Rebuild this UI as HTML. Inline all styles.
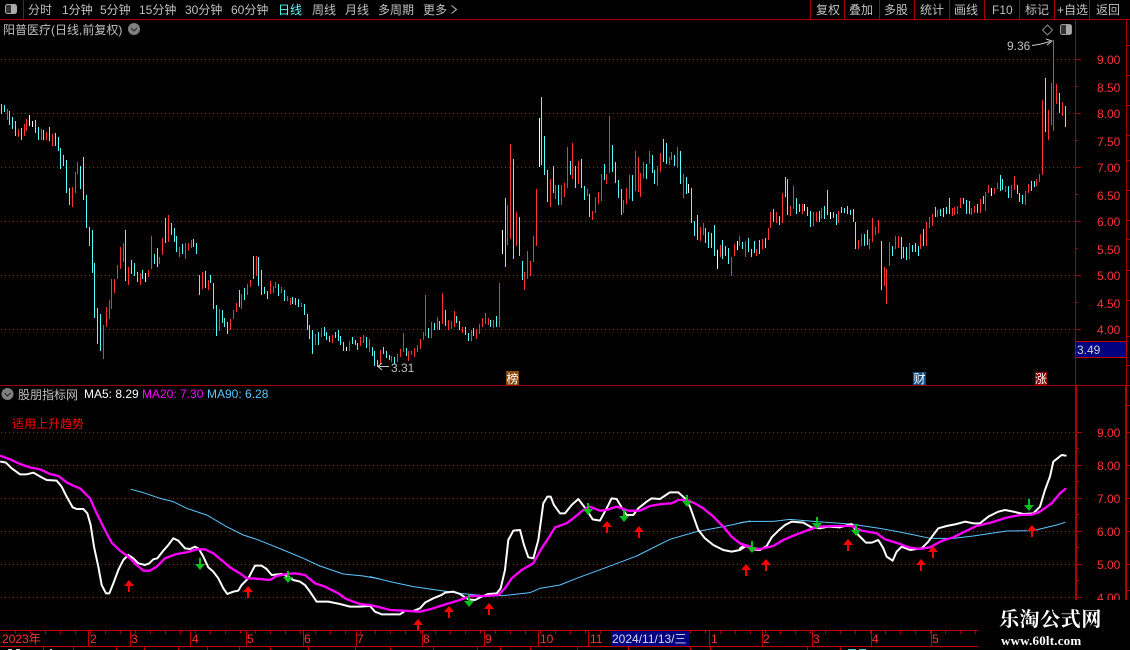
<!DOCTYPE html>
<html><head><meta charset="utf-8"><style>
html,body{margin:0;padding:0;background:#000;width:1130px;height:650px;overflow:hidden}
svg{display:block}
text{font-family:"Liberation Sans","WenQuanYi Zen Hei","Noto Sans CJK SC",sans-serif;font-size:12px;fill:#c0c0c0}
.p{fill:#ff3232}
.line{fill:none;stroke-linejoin:round;stroke-linecap:round}
</style></head><body>
<svg width="1130" height="650" viewBox="0 0 1130 650" xmlns="http://www.w3.org/2000/svg">
<rect width="1130" height="650" fill="#000"/>
<!-- top bar -->
<path d="M0 19.5H1130M23.5 0V19M810.5 0V19M844.5 0V19M879.5 0V19M914.5 0V19M949.5 0V19M984.5 0V19M1019.5 0V19M1054.5 0V19M1089.5 0V19" stroke="#a80000" fill="none"/>
<rect x="5.5" y="4.5" width="11" height="9" rx="2" fill="#333" stroke="#aaa"/><rect x="11" y="5" width="5" height="8" fill="#aaa"/>
<text x="28" y="14">分时</text><text x="62" y="14">1分钟</text><text x="100" y="14">5分钟</text><text x="139" y="14">15分钟</text><text x="185" y="14">30分钟</text><text x="231" y="14">60分钟</text><text x="278" y="14" style="fill:#55ffff">日线</text><text x="312" y="14">周线</text><text x="345" y="14">月线</text><text x="378" y="14">多周期</text><text x="423" y="14">更多</text>
<path d="M451.500 5.500L456.500 9.500L451.500 13.500" stroke="#c0c0c0" fill="none"/>
<text x="816" y="14">复权</text><text x="849" y="14">叠加</text><text x="884" y="14">多股</text><text x="920" y="14">统计</text><text x="954" y="14">画线</text><text x="992" y="14">F10</text><text x="1025" y="14">标记</text><text x="1057" y="14">+自选</text><text x="1096" y="14">返回</text>
<text x="3" y="34">阳普医疗(日线,前复权)</text>
<circle cx="134" cy="29" r="6" fill="#808080"/><path d="M131 28L134 31L137 28" stroke="#222" fill="none"/>
<path d="M1047.500 25L1052.500 30L1047.500 35L1042.500 30Z" stroke="#888" fill="none"/>
<rect x="1060.500" y="24.500" width="11" height="10" rx="2" fill="#333" stroke="#999"/><rect x="1066" y="25" width="5" height="9" fill="#aaa"/>
<!-- grids -->
<g stroke="#a02424" stroke-dasharray="1 3" stroke-width="1">
<path d="M1 59.500H1075M1 113.500H1075M1 167.500H1075M1 221.500H1075M1 275.500H1075M1 329.500H1075"/>
<path d="M1 432.500H1075M1 465.500H1075M1 498.500H1075M1 531.500H1075M1 564.500H1075M1 597.500H1075"/>
</g>
<!-- axes -->
<path d="M1075.500 19V385M1126.500 19V385M1075 59.500H1081M1075 86.500H1078M1075 113.500H1081M1075 140.500H1078M1075 167.500H1081M1075 194.500H1078M1075 221.500H1081M1075 248.500H1078M1075 275.500H1081M1075 302.500H1078M1075 329.500H1081M1126 45.500H1130M1126 75.500H1130M1126 105.500H1130M1126 135.500H1130M1126 160.500H1130M1126 190.500H1130M1126 220.500H1130M1126 239.500H1130M1126 270.500H1130M1126 300.500H1130M1126 336.500H1130M1126 365.500H1130" stroke="#a80000" fill="none"/>
<path d="M0 385.500H1130" stroke="#a00000"/>
<path d="M1076 386V600M1126 386V600" stroke="#b00000" stroke-width="2"/>
<path d="M1076 432.500H1082M1076 448.500H1079M1076 465.500H1082M1076 481.500H1079M1076 498.500H1082M1076 514.500H1079M1076 531.500H1082M1076 547.500H1079M1076 564.500H1082M1076 580.500H1079M1076 597.500H1082M1126 405.500H1130M1126 432.500H1130M1126 465.500H1130M1126 498.500H1130M1126 531.500H1130M1126 564.500H1130M1126 590.500H1130" stroke="#a80000" fill="none"/>
<g class="prices">
<text class="p" x="1097" y="64">9.00</text><text class="p" x="1097" y="92">8.50</text><text class="p" x="1097" y="118">8.00</text><text class="p" x="1097" y="146">7.50</text><text class="p" x="1097" y="172">7.00</text><text class="p" x="1097" y="200">6.50</text><text class="p" x="1097" y="226">6.00</text><text class="p" x="1097" y="254">5.50</text><text class="p" x="1097" y="280">5.00</text><text class="p" x="1097" y="308">4.50</text><text class="p" x="1097" y="334">4.00</text>
<text class="p" x="1097" y="437">9.00</text><text class="p" x="1097" y="470">8.00</text><text class="p" x="1097" y="503">7.00</text><text class="p" x="1097" y="536">6.00</text><text class="p" x="1097" y="569">5.00</text><text class="p" x="1097" y="602">4.00</text>
</g>
<rect x="1075.500" y="341.500" width="51" height="16" fill="#000080" stroke="#c00000"/>
<text x="1077" y="354" style="fill:#d0d0d0">3.49</text>
<!-- candles -->
<g fill="none" stroke-width="1" shape-rendering="crispEdges">
<path stroke="#55ffff" d="M1.500 104V114M4.500 105V112M9.500 111V125M12.500 117V129M15.500 121V136M21.500 128V140M35.500 120V133M38.500 127V140M43.500 130V140M49.500 127V141M55.500 133V146M58.500 137V151M60.500 148V169M63.500 155V166M66.500 160V193M69.500 188V205M80.500 166V189M83.500 157V200M86.500 195V228M89.500 227V246M92.500 230V273M94.500 263V318M97.500 308V344M100.500 314V351M125.500 230V281M131.500 260V274M134.500 263V276M137.500 272V282M142.500 270V279M154.500 254V264M157.500 248V267M165.500 218V243M171.500 223V235M174.500 228V242M176.500 236V252M182.500 244V254M193.500 239V247M196.500 243V254M199.500 275V295M205.500 271V288M210.500 275V283M213.500 283V309M216.500 305V336M222.500 310V323M224.500 318V327M227.500 322V334M239.500 290V307M244.500 288V300M253.500 256V279M258.500 257V286M261.500 270V295M264.500 287V294M267.500 291V299M278.500 284V296M284.500 290V301M292.500 297V304M295.500 298V305M298.500 299V307M304.500 304V315M307.500 314V330M309.500 325V339M312.500 330V354M318.500 332V345M324.500 327V336M326.500 332V340M329.500 336V342M335.500 332V338M338.500 330V341M340.500 336V345M343.500 342V351M352.500 337V344M355.500 340V345M357.500 343V350M366.500 337V348M372.500 347V356M374.500 351V366M377.500 360V367M383.500 347V354M386.500 351V358M389.500 355V360M394.500 357V364M406.500 348V356M428.500 328V338M434.500 323V330M439.500 321V330M445.500 310V326M456.500 316V323M459.500 321V330M465.500 327V335M468.500 333V341M473.500 328V336M490.500 320V327M496.500 316V327M505.500 198V267M513.500 159V259M519.500 217V256M522.500 261V280M541.500 97V165M544.500 136V175M547.500 170V202M553.500 166V193M558.500 185V205M570.500 161V175M575.500 166V188M581.500 159V188M584.500 186V200M589.500 194V217M604.500 164V180M612.500 145V172M615.500 162V183M618.500 180V198M621.500 189V215M632.500 175V201M646.500 164V179M652.500 155V173M654.500 170V184M663.500 139V162M666.500 143V164M674.500 155V166M680.500 151V184M686.500 177V194M691.500 188V223M694.500 221V236M697.500 215V240M705.500 228V243M708.500 232V248M711.500 233V248M714.500 225V256M722.500 240V259M725.500 246V256M728.500 248V264M742.500 242V249M748.500 238V252M751.500 249V257M754.500 241V253M759.500 240V254M765.500 238V248M773.500 209V222M779.500 216V225M785.500 177V197M787.500 179V215M796.500 198V214M799.500 204V212M807.500 207V216M810.500 211V227M819.500 211V222M824.500 206V219M827.500 190V215M833.500 212V218M836.500 214V225M841.500 207V213M844.500 208V213M847.500 206V214M850.500 210V215M853.500 209V222M855.500 222V249M864.500 234V246M867.500 230V245M881.500 241V290M892.500 246V256M901.500 237V259M903.500 247V258M906.500 247V260M912.500 245V252M915.500 243V252M918.500 246V256M923.500 229V246M935.500 207V217M940.500 209V216M943.500 208V217M946.500 207V214M949.500 198V214M963.500 198V204M966.500 200V214M969.500 201V214M977.500 204V213M983.500 196V204M1000.500 175V191M1002.500 179V190M1008.500 186V198M1017.500 185V194M1019.500 193V202M1022.500 195V204M1031.500 181V191M1034.500 181V187M1045.500 78V132M1059.500 93V113M1065.500 106V127"/>
<path stroke="#ff3232" d="M7.500 109V120M18.500 129V137M24.500 124V136M26.500 119V131M41.500 129V140M46.500 132V140M52.500 134V146M72.500 187V207M75.500 172V193M77.500 162V174M103.500 325V359M106.500 307V327M109.500 300V319M111.500 279V309M114.500 279V293M117.500 265V279M120.500 247V269M123.500 243V262M128.500 267V285M140.500 273V285M148.500 270V277M151.500 236V269M159.500 257V264M162.500 238V255M168.500 215V242M179.500 247V257M185.500 243V259M188.500 243V251M191.500 240V248M202.500 272V289M208.500 280V290M219.500 309V331M230.500 319V330M233.500 310V319M236.500 303V312M241.500 294V309M247.500 284V295M250.500 280V287M256.500 256V276M270.500 281V294M273.500 286V293M275.500 282V288M281.500 287V293M287.500 296V301M290.500 298V305M301.500 303V307M315.500 334V345M321.500 328V337M332.500 335V343M349.500 341V351M360.500 337V346M363.500 335V343M369.500 339V352M380.500 350V365M391.500 356V362M397.500 354V362M400.500 349V357M403.500 333V352M408.500 351V361M411.500 351V355M414.500 348V357M417.500 345V352M420.500 339V349M423.500 332V340M425.500 295V336M431.500 322V338M437.500 317V330M442.500 293V324M448.500 320V330M451.500 321V329M454.500 311V327M462.500 327V333M471.500 330V341M476.500 329V339M479.500 324V334M482.500 318V327M485.500 313V324M488.500 318V325M493.500 320V328M499.500 283V327M507.500 205V245M510.500 144V239M516.500 212V246M524.500 272V290M527.500 251V279M530.500 261V276M533.500 236V262M536.500 189V246M550.500 179V207M555.500 185V199M561.500 185V205M564.500 183V197M567.500 147V188M572.500 143V179M578.500 161V184M587.500 189V196M592.500 211V220M595.500 197V213M598.500 192V204M601.500 174V201M606.500 174V184M609.500 116V173M623.500 200V213M626.500 188V204M629.500 175V199M635.500 151V191M638.500 157V192M640.500 173V197M643.500 162V178M649.500 151V164M657.500 166V186M660.500 153V172M669.500 157V165M671.500 152V160M677.500 147V168M683.500 174V198M700.500 227V241M703.500 223V235M720.500 245V257M731.500 257V276M734.500 244V256M739.500 236V246M745.500 241V257M756.500 249V256M762.500 239V249M768.500 228V240M770.500 212V228M776.500 212V223M782.500 193V223M790.500 206V216M793.500 186V209M802.500 204V214M813.500 212V226M816.500 212V222M821.500 208V219M838.500 211V223M858.500 240V249M861.500 234V246M869.500 239V249M872.500 218V242M875.500 227V235M878.500 220V233M884.500 267V286M886.500 269V304M889.500 242V266M895.500 236V249M898.500 236V248M909.500 243V259M920.500 234V249M926.500 222V246M929.500 217V228M932.500 214V226M937.500 210V217M952.500 208V216M954.500 207V215M957.500 206V214M960.500 198V208M971.500 208V215M974.500 206V213M980.500 199V213M985.500 192V211M988.500 185V193M994.500 188V194M997.500 183V189M1005.500 186V192M1011.500 185V198M1014.500 176V190M1025.500 191V205M1028.500 184V193M1036.500 179V186M1039.500 174V182M1042.500 100V175M1048.500 110V140M1051.500 83V125M1053.500 40V131M1056.500 84V104M1062.500 102V116"/>
<path stroke="#ffffff" d="M29.500 115V126M32.500 121V127M145.500 273V282M346.500 347V351M502.500 230V254M539.500 118V167M688.500 184V193M717.500 250V269M737.500 241V250M804.500 204V211M830.500 212V219M991.500 188V196"/>
</g>
<!-- hi/lo marks -->
<text x="1007" y="50">9.36</text><path d="M1032 45.500L1041 44L1050 41.500M1046 39L1052 41L1047 45" stroke="#c8c8c8" fill="none"/>
<text x="391" y="372">3.31</text><path d="M389 366.500H378M382 363L378 366.500L382 370" stroke="#c8c8c8" fill="none"/>
<!-- badges -->
<rect x="506" y="371" width="13" height="14" fill="#8a4a0c"/><text x="506.500" y="383" style="fill:#fff">榜</text>
<rect x="913" y="372" width="13" height="13" fill="#0e4b80"/><text x="913.500" y="383" style="fill:#fff">财</text>
<rect x="1035" y="372" width="12" height="13" fill="#8b0000"/><text x="1035" y="383" style="fill:#fff">涨</text>
<!-- lower title -->
<circle cx="7.500" cy="394" r="6" fill="#808080"/><path d="M4.500 393L7.500 396L10.500 393" stroke="#222" fill="none"/>
<text x="18" y="399">股朋指标网</text>
<text x="84" y="398" style="fill:#fff">MA5: 8.29</text>
<text x="142" y="398" style="fill:#ff00ff">MA20: 7.30</text>
<text x="207" y="398" style="fill:#5ac8ff">MA90: 6.28</text>
<text x="12" y="428" style="fill:#ff0000">适用上升趋势</text>
<!-- blue MA90 -->
<g class="line" stroke="#5ac8ff" stroke-width="3">
<path transform="translate(0 450) scale(.3333)" d="M393 118L430 128L480 145L520 155L560 175L620 195L680 230L730 255L770 268L800 280L850 300L910 325L960 348L1030 372L1090 378L1140 387"/>
<path transform="translate(370 480) scale(.3333)" d="M0 290L60 305L130 320L200 330L270 340L340 347L400 347L480 338L510 325L570 315L620 295L710 262L800 228L900 178L980 155L1060 140L1140 123"/>
<path transform="translate(740 440) scale(.3333)" d="M0 248L30 244L100 244L150 238L230 245L330 252L420 265L500 280L570 295L640 295L700 288L800 273L880 272L950 255L975 247"/>
</g>
<!-- white MA5 -->
<g class="line" stroke="#fff" stroke-width="6">
<path transform="translate(0 450) scale(.3333)" d="M3 35L18 38L35 55L60 73L80 73L100 68L125 82L140 90L170 92L185 110L200 140L218 172L230 177L250 177L262 190L272 225L282 290L295 350L305 405L318 430L328 430L340 400L355 360L370 330L385 315L400 325L415 340L435 345L448 340L460 328L472 325L490 302L505 285L520 265L535 272L555 295L570 297L585 290L597 297L610 320L625 352L640 365L655 385L670 415L682 432L700 425L715 422L725 405L745 385L765 347L785 347L800 357L815 375L845 372L865 380L880 390L900 395L915 405L930 425L950 455L985 455L1020 462L1050 470L1080 470L1110 468"/>
<path transform="translate(370 480) scale(.3333)" d="M0 378L15 395L35 403L60 403L90 403L105 393L130 393L150 385L165 368L190 355L215 345L225 338L250 335L270 342L295 358L315 360L335 350L355 342L380 340L392 325L405 270L415 180L430 152L450 150L462 195L475 232L490 235L505 180L520 70L532 50L542 50L552 75L570 100L585 100L605 75L625 57L650 90L668 118L690 122L710 85L725 55L740 57L755 82L770 105L790 105L805 85L830 65L845 55L870 57L900 37L925 37L945 55L960 80L985 150L1005 175L1030 195L1060 210L1085 215L1110 210L1125 200L1140 200"/>
<path transform="translate(740 440) scale(.3333)" d="M0 325L15 315L35 328L60 330L80 318L95 292L115 272L135 255L155 245L190 248L215 262L240 265L265 260L300 262L335 252L355 285L378 308L395 308L415 300L430 325L440 350L458 362L470 335L485 320L510 330L545 325L565 305L585 278L595 265L620 258L650 252L675 245L700 250L720 250L745 230L775 215L795 210L820 215L850 222L880 220L900 200L915 150L930 110L940 65L965 45L977 47"/>
</g>
<!-- magenta MA20 -->
<g class="line" stroke="#ff00ff" stroke-width="7">
<path transform="translate(0 450) scale(.3333)" d="M3 18L30 28L60 42L90 52L120 58L150 72L175 78L200 97L220 107L240 115L270 145L290 190L315 240L335 278L360 302L385 320L410 345L430 362L450 362L470 350L495 325L530 312L560 307L590 298L615 298L640 310L670 335L690 352L720 370L740 385L770 386L810 390L830 378L860 372L885 370L915 375L945 400L975 410L1015 430L1035 445L1060 455L1080 462L1110 465"/>
<path transform="translate(370 480) scale(.3333)" d="M0 375L30 382L60 390L100 392L150 395L180 388L230 372L270 360L300 348L345 348L385 345L405 325L425 295L455 270L490 250L515 205L535 175L555 142L590 130L610 115L640 90L660 80L690 92L710 90L740 80L775 92L810 92L840 78L875 72L905 70L925 60L950 60L975 70L1000 85L1030 110L1060 140L1085 170L1110 190L1140 200"/>
<path transform="translate(740 440) scale(.3333)" d="M0 310L30 325L60 327L100 318L130 300L165 285L200 272L235 260L280 258L335 258L365 272L410 280L435 298L475 310L505 322L540 327L570 322L605 303L640 292L680 272L710 258L755 247L800 233L840 225L875 224L900 215L935 190L960 160L976 147"/>
</g>
<!-- red up arrows -->
<g fill="#ff0000">
<path d="M129 580l5 6h-4v6h-2v-6h-4z"/><path d="M248 586l5 6h-4v6h-2v-6h-4z"/><path d="M418 619l5 6h-4v6h-2v-6h-4z"/><path d="M449 606l5 6h-4v6h-2v-6h-4z"/><path d="M489 603l5 6h-4v6h-2v-6h-4z"/><path d="M607 521l5 6h-4v6h-2v-6h-4z"/><path d="M639 526l5 6h-4v6h-2v-6h-4z"/><path d="M746 564l5 6h-4v6h-2v-6h-4z"/><path d="M766 559l5 6h-4v6h-2v-6h-4z"/><path d="M848 539l5 6h-4v6h-2v-6h-4z"/><path d="M921 559l5 6h-4v6h-2v-6h-4z"/><path d="M933 546l5 6h-4v6h-2v-6h-4z"/><path d="M1032 525l5 6h-4v6h-2v-6h-4z"/>
</g>
<!-- green down arrows -->
<g fill="#0cc01c">
<path d="M200 570l-5 -6h4v-6h2v6h4z"/><path d="M288 583l-5 -6h4v-6h2v6h4z"/><path d="M469 607l-5 -6h4v-6h2v6h4z"/><path d="M588 515l-5 -6h4v-6h2v6h4z"/><path d="M624 522l-5 -6h4v-6h2v6h4z"/><path d="M687 507l-5 -6h4v-6h2v6h4z"/><path d="M752 553l-5 -6h4v-6h2v6h4z"/><path d="M817 529l-5 -6h4v-6h2v6h4z"/><path d="M856 536l-5 -6h4v-6h2v6h4z"/><path d="M1029 511l-5 -6h4v-6h2v6h4z"/>
</g>
<!-- watermark mask -->
<rect x="978" y="600" width="152" height="50" fill="#000"/>
<!-- time axis -->
<path d="M0 630.500H978M0 646.500H978M88.500 630V646M130.500 630V646M190.500 630V646M246.500 630V646M303.500 630V646M356.500 630V646M422.500 630V646M484.500 630V646M538.500 630V646M588.500 630V646M709.500 630V646M762.500 630V646M812.500 630V646M871.500 630V646M931.500 630V646M43.500 646V650M73.500 646V650M116.500 646V650M144.500 646V650M178.500 646V650M207.500 646V650M239.500 646V650M270.500 646V650M308.500 646V650M355.500 646V650M390.500 646V650M433.500 646V650M477.500 646V650M500.500 646V650M530.500 646V650M577.500 646V650M628.500 646V650M690.500 646V650M710.500 646V650M807.500 646V650M840.500 646V650" stroke="#c00000" fill="none"/>
<line x1="15" y1="632" x2="978" y2="632" stroke="#c00000" stroke-width="3" stroke-dasharray="1 14"/>
<text class="p" x="2" y="643">2023年</text><text class="p" x="90" y="643">2</text><text class="p" x="131" y="643">3</text><text class="p" x="192" y="643">4</text><text class="p" x="247" y="643">5</text><text class="p" x="304" y="643">6</text><text class="p" x="357" y="643">7</text><text class="p" x="423" y="643">8</text><text class="p" x="485" y="643">9</text><text class="p" x="540" y="643">10</text><text class="p" x="590" y="643">11</text><text class="p" x="711" y="643">1</text><text class="p" x="763" y="643">2</text><text class="p" x="813" y="643">3</text><text class="p" x="872" y="643">4</text><text class="p" x="932" y="643">5</text>
<rect x="611" y="631" width="78" height="15" fill="#000080"/>
<text x="612" y="643" style="fill:#d8d8e8">2024/11/13/三</text>
<path d="M8 649.500H12M16 649.500H20M50 649.500H52" stroke="#ccc"/><path d="M848 649.500H856M859 649.500H866" stroke="#55cccc"/>
<!-- watermark -->
<text x="999" y="626" style="font-family:'Liberation Serif','Noto Serif CJK SC',serif;font-size:20px;font-weight:700;fill:#fff;letter-spacing:.6px">乐淘公式网</text>
<text x="1001" y="645" style="font-family:'Liberation Serif',serif;font-size:13px;font-weight:700;fill:#fff;letter-spacing:.2px">www.60lt.com</text>
</svg>
</body></html>
